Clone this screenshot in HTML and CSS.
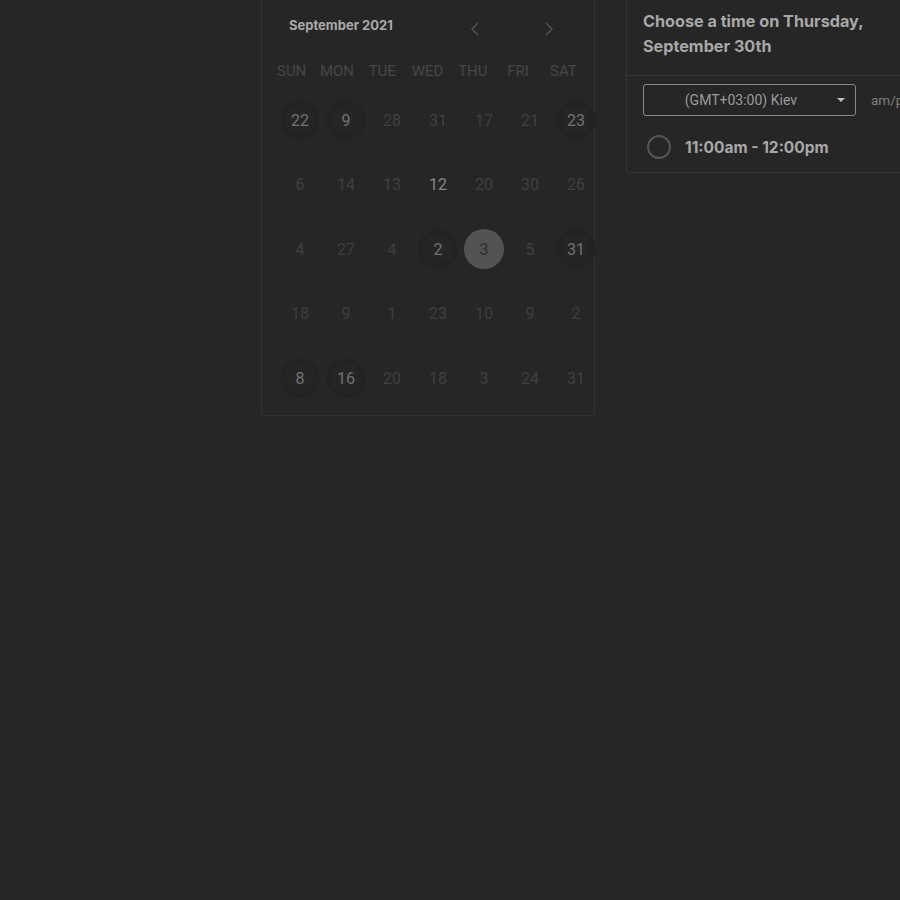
FILE: index.html
```html
<!DOCTYPE html>
<html>
<head>
<meta charset="utf-8">
<link rel="stylesheet" href="styles.css">
</head>
<body>
<div class="page">
  <section class="calendar">
    <div class="cal-head">
      <span class="month">September 2021</span>
      <div class="nav">
        <svg class="arrow" width="10" height="16" viewBox="0 0 10 16"><path d="M8 2 L2 8 L8 14" fill="none" stroke="#4f4f4f" stroke-width="1.6"/></svg>
        <svg class="arrow" width="10" height="16" viewBox="0 0 10 16"><path d="M2 2 L8 8 L2 14" fill="none" stroke="#4f4f4f" stroke-width="1.6"/></svg>
      </div>
    </div>
    <div class="weekdays">
      <span>SUN</span><span>MON</span><span>TUE</span><span>WED</span><span>THU</span><span>FRI</span><span>SAT</span>
    </div>
    <div class="days">
      <span class="day ring">22</span><span class="day ring">9</span><span class="day">28</span><span class="day">31</span><span class="day">17</span><span class="day">21</span><span class="day ring">23</span>
      <span class="day">6</span><span class="day">14</span><span class="day">13</span><span class="day bright">12</span><span class="day">20</span><span class="day">30</span><span class="day">26</span>
      <span class="day">4</span><span class="day">27</span><span class="day">4</span><span class="day ring">2</span><span class="day selected">3</span><span class="day">5</span><span class="day ring">31</span>
      <span class="day">18</span><span class="day">9</span><span class="day">1</span><span class="day">23</span><span class="day">10</span><span class="day">9</span><span class="day">2</span>
      <span class="day ring">8</span><span class="day ring">16</span><span class="day">20</span><span class="day">18</span><span class="day">3</span><span class="day">24</span><span class="day">31</span>
    </div>
  </section>
  <section class="times">
    <h2 class="times-title">Choose a time on Thursday,<br>September 30th</h2>
    <div class="times-body">
      <div class="controls">
        <div class="select">
          <span>(GMT+03:00) Kiev</span>
          <span class="caret"></span>
        </div>
        <span class="format">am/pm</span>
      </div>
      <label class="slot">
        <span class="radio"></span>
        <span class="slot-text">11:00am - 12:00pm</span>
      </label>
    </div>
  </section>
</div>
</body>
</html>
```
FILE: styles.css
```css
html, body {
  margin: 0;
  padding: 0;
  background: #262626;
  overflow: hidden;
  width: 900px;
  height: 900px;
}

.page {
  display: flex;
  align-items: flex-start;
  gap: 31px;
  padding-left: 261px;
  margin-top: -12px;
}

.calendar {
  flex: none;
  width: 332px;
  height: 426px;
  border: 1px solid #323232;
  border-radius: 3px;
  box-sizing: content-box;
  font-family: Roboto, "Liberation Sans", sans-serif;
}

.cal-head {
  display: flex;
  align-items: center;
  height: 40px;
  margin-top: 16px;
  padding-left: 27px;
}

.month {
  font-family: Inter, "Liberation Sans", sans-serif;
  font-weight: 700;
  font-size: 13px;
  color: #a9a9a9;
  width: 181px;
}

.nav {
  display: flex;
  gap: 64px;
  padding-top: 8px;
}

.arrow {
  display: block;
}

.weekdays {
  display: grid;
  grid-template-columns: repeat(7, 45.3px);
  padding-left: 7px;
  margin-top: 11px;
  height: 30px;
  align-items: center;
}

.weekdays span {
  text-align: center;
  font-size: 15px;
  color: #474747;
}

.days {
  display: grid;
  grid-template-columns: repeat(7, 46px);
  grid-auto-rows: 64.5px;
  padding-left: 15px;
  margin-top: 2px;
}

.day {
  justify-self: center;
  align-self: center;
  width: 40px;
  height: 40px;
  border-radius: 50%;
  display: flex;
  align-items: center;
  justify-content: center;
  font-size: 16px;
  color: #404040;
}

.day.bright {
  color: #858585;
}

.day.ring {
  color: #727272;
  background: radial-gradient(circle, #262626 0%, #252525 40%, #222222 64%, #232323 70%, rgba(38,38,38,0) 72%);
}

.day.selected {
  background: #535353;
  color: #2e2e2e;
}

.times {
  flex: none;
  width: 320px;
  border: 1px solid #363636;
  border-radius: 3px;
  font-family: Inter, "Liberation Sans", sans-serif;
}

.times-title {
  margin: 0;
  padding: 20px 16px 16px 16px;
  font-size: 16.2px;
  line-height: 25px;
  font-weight: 700;
  color: #a8a8a8;
  border-bottom: 1px solid #363636;
}

.times-body {
  padding: 8px 16px 0 16px;
}

.controls {
  display: flex;
  align-items: center;
  gap: 15px;
}

.select {
  height: 30px;
  border: 1px solid #8a8a8a;
  border-radius: 3px;
  display: flex;
  align-items: center;
  justify-content: flex-end;
  gap: 40px;
  padding-right: 10px;
  box-sizing: content-box;
  width: 201px;
  font-family: Roboto, "Liberation Sans", sans-serif;
  font-size: 14px;
  color: #9a9a9a;
}

.caret {
  width: 0;
  height: 0;
  border-left: 4px solid transparent;
  border-right: 4px solid transparent;
  border-top: 4px solid #bdbdbd;
}

.format {
  font-family: Roboto, "Liberation Sans", sans-serif;
  font-size: 13.5px;
  color: #7f7f7f;
  white-space: nowrap;
}

.slot {
  display: flex;
  align-items: center;
  gap: 14px;
  padding: 19px 0 13px 4px;
}

.radio {
  width: 20px;
  height: 20px;
  border: 2px solid #555555;
  border-radius: 50%;
}

.slot-text {
  font-size: 15.5px;
  font-weight: 700;
  color: #a8a8a8;
}
```
